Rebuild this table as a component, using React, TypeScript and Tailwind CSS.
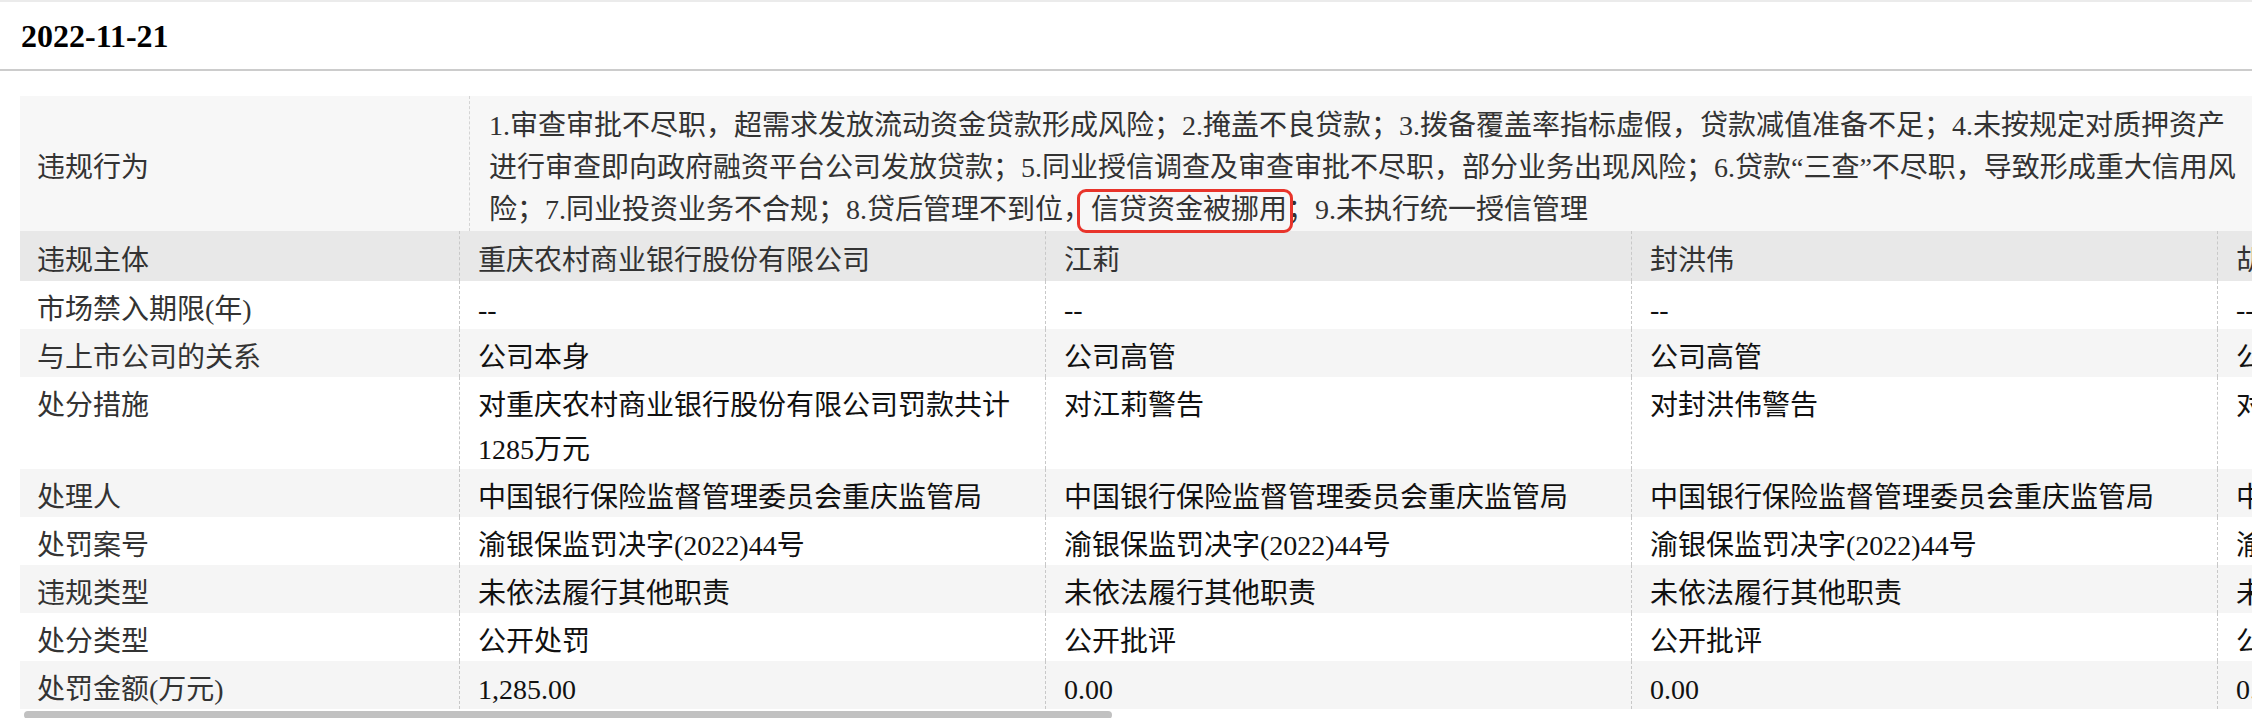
import React from "react";

const FONT = "font-['Liberation_Serif','Noto_Sans_CJK_SC',serif]";

type Row = { label: string; values: string[]; bg: string; h: string };

const rows: Row[] = [
  { label: "违规主体", values: ["重庆农村商业银行股份有限公司", "江莉", "封洪伟", "胡军"], bg: "bg-[#e8e8e8]", h: "h-[50px] pt-[8px]" },
  { label: "市场禁入期限(年)", values: ["--", "--", "--", "--"], bg: "bg-white", h: "h-[48px] pt-[7px]" },
  { label: "与上市公司的关系", values: ["公司本身", "公司高管", "公司高管", "公司高管"], bg: "bg-[#f5f5f5]", h: "h-[48px] pt-[7px]" },
  {
    label: "处分措施",
    values: ["对重庆农村商业银行股份有限公司罚款共计1285万元", "对江莉警告", "对封洪伟警告", "对胡军警告"],
    bg: "bg-white",
    h: "h-[92px] pt-[7px]",
  },
  {
    label: "处理人",
    values: [
      "中国银行保险监督管理委员会重庆监管局",
      "中国银行保险监督管理委员会重庆监管局",
      "中国银行保险监督管理委员会重庆监管局",
      "中国银行保险监督管理委员会重庆监管局",
    ],
    bg: "bg-[#f5f5f5]",
    h: "h-[48px] pt-[7px]",
  },
  {
    label: "处罚案号",
    values: ["渝银保监罚决字(2022)44号", "渝银保监罚决字(2022)44号", "渝银保监罚决字(2022)44号", "渝银保监罚决字(2022)44号"],
    bg: "bg-white",
    h: "h-[48px] pt-[7px]",
  },
  {
    label: "违规类型",
    values: ["未依法履行其他职责", "未依法履行其他职责", "未依法履行其他职责", "未依法履行其他职责"],
    bg: "bg-[#f5f5f5]",
    h: "h-[48px] pt-[7px]",
  },
  { label: "处分类型", values: ["公开处罚", "公开批评", "公开批评", "公开批评"], bg: "bg-white", h: "h-[48px] pt-[7px]" },
  { label: "处罚金额(万元)", values: ["1,285.00", "0.00", "0.00", "0.00"], bg: "bg-[#f5f5f5]", h: "h-[48px] pt-[7px]" },
];

export default function App() {
  return (
    <div className={`w-full h-screen overflow-hidden bg-white ${FONT}`}>
      <div className="h-[2px] bg-[#ebebeb]" />
      {/* Date header */}
      <header className="h-[69px] flex items-center pl-[21px] border-b-2 border-[#cccccc]">
        <h1 className="text-[32px] font-bold text-black leading-none">2022-11-21</h1>
      </header>

      <div className="pt-[25px] pl-[20px]">
        {/* Violation description */}
        <div className="relative z-10 flex w-[2239px] h-[135px] bg-[#f7f7f7]">
          <div className="w-[449px] shrink-0 flex items-center pl-[17px] pt-[8px] text-[28px] text-[#333]">违规行为</div>
          <div className="flex-1 flex items-center border-l border-dashed border-[#d4d4d4] pl-[19px] pr-[19px] pt-[8px]">
            <p className="text-[28px] leading-[42px] text-[#333]">
              1.审查审批不尽职，超需求发放流动资金贷款形成风险；2.掩盖不良贷款；3.拨备覆盖率指标虚假，贷款减值准备不足；4.未按规定对质押资产进行审查即向政府融资平台公司发放贷款；5.同业授信调查及审查审批不尽职，部分业务出现风险；6.贷款“三查”不尽职，导致形成重大信用风险；7.同业投资业务不合规；8.贷后管理不到位，
              <span className="relative inline-block">
                信贷资金被挪用
                <span className="absolute left-[-14px] right-[-6px] top-[0px] bottom-[-2px] border-[3px] border-[#e8342b] rounded-[9px]" />
              </span>
              ；9.未执行统一授信管理
            </p>
          </div>
        </div>

        {/* Details table */}
        <div className="w-[2783px]">
          {rows.map((r) => (
            <div key={r.label} className={`grid grid-cols-[439px_586px_586px_586px_586px] ${r.bg}`}>
              <div className={`${r.h} pl-[17px] text-[28px] leading-[44px] text-[#333] overflow-hidden`}>{r.label}</div>
              {r.values.map((v, i) => (
                <div
                  key={i}
                  className={`${r.h} overflow-hidden border-l border-dashed border-[#c8c8c8] pl-[18px] pr-[19px] text-[28px] leading-[44px] ${
                    r.label === "违规主体" ? "text-[#333]" : "text-[#111]"
                  }`}
                >
                  {v}
                </div>
              ))}
            </div>
          ))}
        </div>

        {/* Horizontal scrollbar */}
        <div className="mt-[2px] ml-[4px] w-[1088px] h-[8px] rounded-full bg-[#c1c1c1]" />
      </div>
    </div>
  );
}
